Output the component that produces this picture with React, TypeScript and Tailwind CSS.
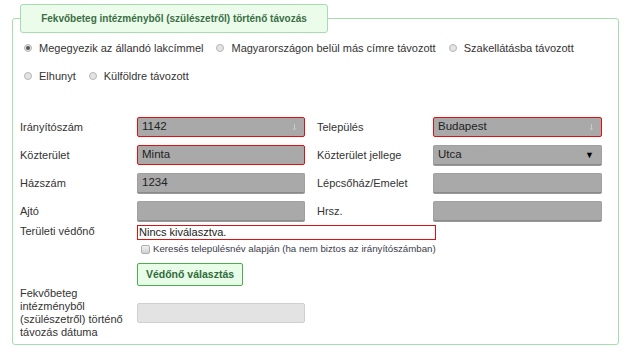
import React from "react";

const F = { fontFamily: '"Liberation Sans", Arial, sans-serif' };

function Radio({ checked }: { checked?: boolean }) {
  return (
    <span className="w-[8px] h-[8px] rounded-full border border-[#b5b5b5] bg-[#e4e4e4] flex items-center justify-center shrink-0">
      {checked && <span className="w-[4px] h-[4px] rounded-full bg-[#555]" />}
    </span>
  );
}

function RadioItem({ label, checked }: { label: string; checked?: boolean }) {
  return (
    <div className="flex items-center gap-[7px] mr-[13px] whitespace-nowrap">
      <Radio checked={checked} />
      <span className="text-[11px] text-[#333] leading-[16px]">{label}</span>
    </div>
  );
}

function SmallArrows() {
  return (
    <svg width="5" height="8" viewBox="0 0 5 8" className="shrink-0">
      <path d="M2.5 1 V7 M1 5.5 L2.5 7 L4 5.5" stroke="#c8c8c8" strokeWidth="1" fill="none" />
    </svg>
  );
}

function Input({
  value,
  error,
  arrows,
  caret,
  w,
}: {
  value?: string;
  error?: boolean;
  arrows?: boolean;
  caret?: boolean;
  w: string;
}) {
  return (
    <div
      className={`${w} h-[20px] rounded-[2px] bg-[#a9a9a9] flex items-center pl-[4px] pr-[7px] ${
        error
          ? "border border-[#e01010]"
          : "border border-[#a0a0a0] border-b-[#8a8a8a] shadow-[0_1px_0_#9a9a9a]"
      }`}
    >
      <span className="flex-1 text-[11.5px] text-[#222]">{value}</span>
      {arrows && <SmallArrows />}
      {caret && <span className="text-[9px] text-black leading-none">▼</span>}
    </div>
  );
}

function Label({ children, w }: { children: React.ReactNode; w: string }) {
  return <div className={`${w} text-[11px] text-[#333] shrink-0 whitespace-nowrap`}>{children}</div>;
}

export default function App() {
  return (
    <div className="w-[642px] h-[358px] bg-white overflow-hidden pt-[18px] pl-[12px]" style={F}>
      <div className="relative w-[607px] h-[327px] border border-[#a6dcae] rounded-[3px]">
        <div className="absolute left-[7px] top-[-15px] w-[308px] h-[29px] bg-[#ebfceb] border border-[#a6dcae] rounded-[3px] flex items-center justify-center">
          <span className="text-[10px] font-bold text-[#3b6e45] whitespace-nowrap">
            Fekvőbeteg intézményből (szülészetről) történő távozás
          </span>
        </div>

        <div className="pl-[11px] pt-[21px]">
          <div className="flex h-[16px]">
            <RadioItem label="Megegyezik az állandó lakcímmel" checked />
            <RadioItem label="Magyarországon belül más címre távozott" />
            <RadioItem label="Szakellátásba távozott" />
          </div>
          <div className="flex h-[16px] mt-[12px]">
            <RadioItem label="Elhunyt" />
            <RadioItem label="Külföldre távozott" />
          </div>
        </div>

        <div className="pl-[7px] mt-[33px] flex flex-col">
          <div className="flex flex-col gap-[8px]">
            <div className="flex items-center h-[20px]">
              <Label w="w-[117px]">Irányítószám</Label>
              <Input w="w-[168px]" value="1142" error arrows />
              <div className="w-[12px]" />
              <Label w="w-[116px]">Település</Label>
              <Input w="w-[169px]" value="Budapest" error arrows />
            </div>
            <div className="flex items-center h-[20px]">
              <Label w="w-[117px]">Közterület</Label>
              <Input w="w-[168px]" value="Minta" error />
              <div className="w-[12px]" />
              <Label w="w-[116px]">Közterület jellege</Label>
              <Input w="w-[169px]" value="Utca" caret />
            </div>
            <div className="flex items-center h-[20px]">
              <Label w="w-[117px]">Házszám</Label>
              <Input w="w-[168px]" value="1234" />
              <div className="w-[12px]" />
              <Label w="w-[116px]">Lépcsőház/Emelet</Label>
              <Input w="w-[169px]" />
            </div>
            <div className="flex items-center h-[20px]">
              <Label w="w-[117px]">Ajtó</Label>
              <Input w="w-[168px]" />
              <div className="w-[12px]" />
              <Label w="w-[116px]">Hrsz.</Label>
              <Input w="w-[169px]" />
            </div>
          </div>

          <div className="flex items-center h-[15px] mt-[4px]">
            <div className="w-[117px] text-[11px] text-[#333] shrink-0 -mt-[3px]">Területi védőnő</div>
            <div className="w-[299px] h-[15px] border border-[#e01010] flex items-center pl-[1px]">
              <span className="text-[11px] text-[#222] leading-none">Nincs kiválasztva.</span>
            </div>
          </div>

          <div className="flex items-center h-[10px] mt-[4px] pl-[121px] gap-[3px]">
            <span className="w-[9px] h-[9px] rounded-[2px] border border-[#b0b0b0] bg-gradient-to-b from-[#f2f2f2] to-[#d0d0d0] shrink-0" />
            <span className="text-[9.7px] text-[#3a3a4a] leading-none whitespace-nowrap">
              Keresés településnév alapján (ha nem biztos az irányítószámban)
            </span>
          </div>

          <div className="pl-[117px] mt-[9px]">
            <div className="w-[106px] h-[23px] border border-[#4cae4c] rounded-[2px] bg-[#e8fde8] flex items-center justify-center">
              <span className="text-[10.5px] font-bold text-[#2f6b3a] whitespace-nowrap">Védőnő választás</span>
            </div>
          </div>

          <div className="flex items-center mt-[1px]">
            <div className="w-[117px] text-[11px] leading-[13px] text-[#333] shrink-0 whitespace-nowrap">
              Fekvőbeteg
              <br />
              intézményből
              <br />
              (szülészetről) történő
              <br />
              távozás dátuma
            </div>
            <div className="w-[168px] h-[20px] rounded-[2px] bg-[#e3e3e3] border border-[#cfcfcf]" />
          </div>
        </div>
      </div>
    </div>
  );
}
